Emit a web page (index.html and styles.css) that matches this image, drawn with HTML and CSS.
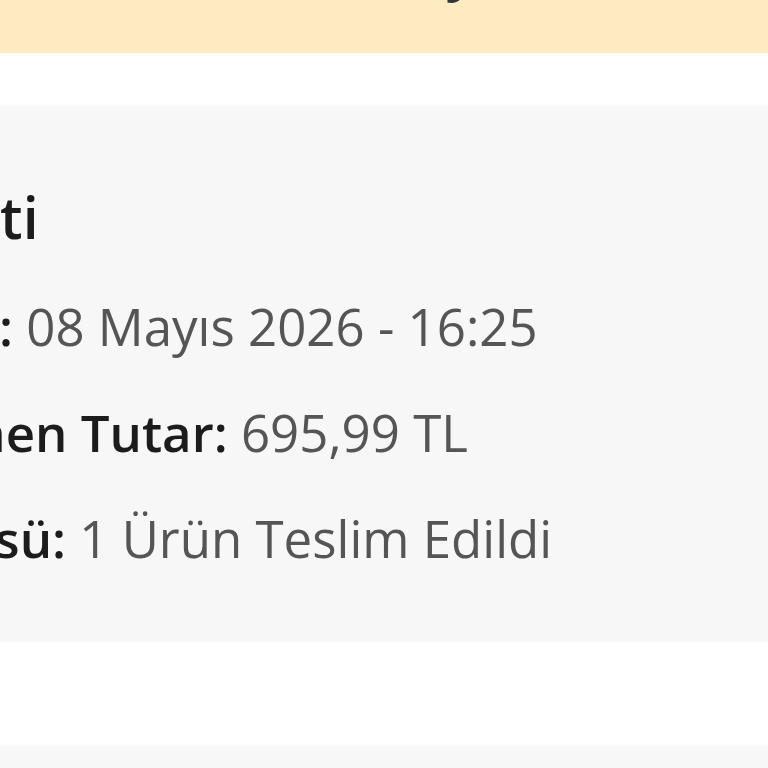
FILE: index.html
```html
<!DOCTYPE html>
<html lang="tr">
<head>
<meta charset="utf-8">
<link rel="stylesheet" href="styles.css">
</head>
<body>
<div class="page">
  <div class="banner"><span class="banner-text">Kolay İade</span></div>
  <section class="panel">
    <div class="panel-inner">
      <h2 class="title">Ücreti</h2>
      <div class="row"><span class="label">Tarih:</span> <span class="value">08 Mayıs 2026 - 16:25</span></div>
      <div class="row"><span class="label">Ödenen Tutar:</span> <span class="value">695,99 TL</span></div>
      <div class="row"><span class="label">Örgüsü:</span> <span class="value">1 Ürün Teslim Edildi</span></div>
    </div>
  </section>
  <section class="panel panel-next"></section>
</div>
</body>
</html>
```
FILE: styles.css
```css
html, body {
  margin: 0;
  padding: 0;
  background: #ffffff;
  overflow: hidden;
}
body {
  font-family: "Open Sans", "Noto Sans", sans-serif;
  width: 768px;
  height: 768px;
}
.page {
  display: flex;
  flex-direction: column;
}
.banner {
  height: 53px;
  background: #feebc1;
  overflow: hidden;
  display: flex;
  align-items: flex-start;
  padding-left: 334px;
  margin-bottom: 53px;
}
.banner-text {
  font-size: 51px;
  font-weight: 700;
  color: #333333;
  line-height: 60px;
  margin-top: -59px;
  white-space: nowrap;
}
.panel {
  background: #f7f7f7;
  height: 536px;
  box-sizing: border-box;
  padding-top: 72px;
  overflow: hidden;
}
.panel-inner {
  margin-left: -128px;
  white-space: nowrap;
}
.title {
  margin: 0 0 17px 0;
  font-size: 57px;
  font-weight: 600;
  color: #1c1c1c;
  line-height: normal;
}
.row {
  font-size: 51px;
  line-height: 106px;
  color: #555555;
}
.label {
  font-weight: 600;
  color: #1c1c1c;
}
.value {
  font-weight: 400;
  color: #555555;
}
.panel-next {
  margin-top: 104px;
  height: 200px;
  padding: 0;
}
```
